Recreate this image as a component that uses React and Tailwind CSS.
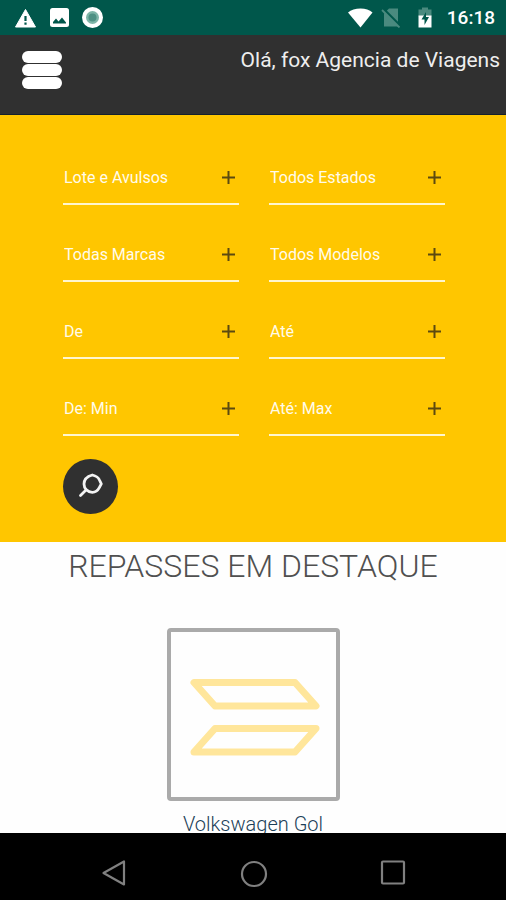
import React from "react";

const filters = [
  { id: "tipo", label: "Lote e Avulsos" },
  { id: "estado", label: "Todos Estados" },
  { id: "marca", label: "Todas Marcas" },
  { id: "modelo", label: "Todos Modelos" },
  { id: "ano-de", label: "De" },
  { id: "ano-ate", label: "Até" },
  { id: "valor-min", label: "De: Min" },
  { id: "valor-max", label: "Até: Max" },
];

function StatusBar() {
  return (
    <div className="flex h-[35px] shrink-0 items-center justify-between bg-[#00574b] pr-[11px] pl-[14px] text-white">
      <div className="flex items-center gap-3">
        <svg className="h-[22px] w-[23px]" viewBox="0 0 23 22" fill="currentColor">
          <path d="M11.5 2.5 21.5 20h-20z" stroke="currentColor" strokeLinejoin="round" />
          <path d="M10.4 9h2.2v5h-2.2zM10.4 15.5h2.2v2.2h-2.2z" fill="#00574b" />
        </svg>
        <svg className="h-5 w-5" viewBox="0 0 20 20">
          <rect x="1" y="0" width="19" height="19" rx="2.5" fill="currentColor" />
          <path d="M4 15.500v-1.500l3-3.500 2.500 3 3.500-4 4 5v1z" fill="#00574b" />
        </svg>
        <svg className="h-[22px] w-[22px]" viewBox="0 0 22 22">
          <circle cx="11.500" cy="10.500" r="10.500" fill="currentColor" />
          <circle cx="11.500" cy="10.500" r="6.500" fill="#7fb5a8" />
          <circle cx="11.500" cy="10.500" r="4" fill="#4f9184" />
        </svg>
      </div>
      <div className="flex items-center">
        <svg className="mr-2 h-5 w-[26px]" viewBox="0 0 26 20" fill="currentColor">
          <path d="M1 4.500C4 2 8.500 0.500 13.500 0.500s9 1.500 12 4L13.500 19.500z" />
        </svg>
        <svg className="mr-4 h-5 w-5" viewBox="0 0 20 20">
          <path d="M8 0.500h9v18H3V5.500z" fill="#4a8a7f" />
          <path d="M2 0.500 19.500 18" stroke="#00574b" strokeWidth="2.500" />
          <path d="M1 2 18.500 19.500" stroke="#4a8a7f" strokeWidth="1.800" />
        </svg>
        <svg className="mr-[14px] h-[22px] w-4" viewBox="0 0 16 22">
          <path d="M5 0.500h6v2h3.500v7h-13v-7H5z" fill="#4a8a7f" />
          <path d="M1.500 8.500h13v12h-13z" fill="currentColor" />
          <path d="M9 5 4.500 12.500H7.500v5.500l4.500-8H9z" fill="#00574b" />
        </svg>
        <span className="text-[19px] leading-6 font-medium">16:18</span>
      </div>
    </div>
  );
}

function Header() {
  return (
    <header className="flex h-20 shrink-0 items-start justify-between border-b border-[#14202c] bg-[#303030] pt-3 pr-[6px] pl-[22px]">
      <button type="button" aria-label="Menu" className="mt-1 flex w-10 flex-col gap-px">
        <span className="h-3 w-full rounded-full bg-white" />
        <span className="h-3 w-full rounded-full bg-white" />
        <span className="h-3 w-full rounded-full bg-white" />
      </button>
      <p className="text-[21px] leading-[26px] text-[#eeeeee]">Olá, fox Agencia de Viagens</p>
    </header>
  );
}

function Filter({ id, label }) {
  return (
    <label htmlFor={id} className="grid grid-cols-1 items-center border-b-2 border-[#fff6cf]">
      <select
        id={id}
        aria-label={label}
        className="col-start-1 row-start-1 h-[52px] w-full appearance-none bg-transparent pt-[2px] pl-px text-base leading-normal text-[#fffbea] outline-none"
      >
        <option>{label}</option>
      </select>
      <svg
        className="pointer-events-none col-start-1 row-start-1 mr-1 h-[13px] w-[13px] justify-self-end"
        viewBox="0 0 13 13"
        stroke="#5c4a10"
        strokeWidth="2"
      >
        <path d="M6.500 0v13M0 6.500h13" />
      </svg>
    </label>
  );
}

function SearchForm() {
  return (
    <form className="grid shrink-0 grid-cols-2 gap-x-[30px] gap-y-[23px] bg-[#ffc600] pt-9 pr-[61px] pb-7 pl-[63px]">
      {filters.map((f) => (
        <Filter key={f.id} id={f.id} label={f.label} />
      ))}
      <button
        type="button"
        aria-label="Buscar"
        className="flex h-[55px] w-[55px] items-center justify-center rounded-full bg-[#303030]"
      >
        <svg
          className="h-[27px] w-[27px]"
          viewBox="0 0 27 27"
          fill="none"
          stroke="#f4f4f4"
          strokeWidth="2.800"
          strokeLinecap="round"
        >
          <path
            d="M15.300 2C17.500 2.600 21 3.600 22.200 6.500L24.300 10.800L22.300 14.600C20.500 18 18 19.300 15.300 19.300C10.500 19.300 7 15.500 7 11C7 6.500 10.500 3.300 15.300 2z"
            strokeLinejoin="round"
          />
          <path d="M9 17 3.500 22.500" />
        </svg>
      </button>
    </form>
  );
}

function Featured() {
  return (
    <section className="flex flex-col items-center pt-1">
      <h1 className="text-[32px] leading-10 font-light whitespace-nowrap text-[#505050]">REPASSES EM DESTAQUE</h1>
      <a href="#gol" className="mt-[42px] flex flex-col items-center">
        <svg
          className="box-border h-[173px] w-[173px] rounded-sm border-4 border-[#aaaaaa]"
          viewBox="0 0 165 165"
          fill="none"
          stroke="#ffe69b"
          strokeWidth="7"
          strokeLinejoin="round"
        >
          <path d="M23 50.500H124L145 74H44z" />
          <path d="M44 96.500H145L124 120H23z" />
        </svg>
        <span className="mt-2 text-xl leading-[30px] font-light text-[#1c3f58]">Volkswagen Gol</span>
      </a>
    </section>
  );
}

function NavBar() {
  return (
    <nav className="flex h-[67px] shrink-0 items-center justify-between bg-black pt-[14px] pr-[100px] pl-[101px] text-[#808080]">
      <button type="button" aria-label="Voltar">
        <svg className="h-7 w-[26px]" viewBox="0 0 26 28" fill="none" stroke="currentColor" strokeWidth="2.200">
          <path d="M23 1.500v23L2.500 13z" strokeLinejoin="round" />
        </svg>
      </button>
      <button type="button" aria-label="Início">
        <svg className="h-7 w-7" viewBox="0 0 28 28" fill="none" stroke="currentColor" strokeWidth="2.200">
          <circle cx="14" cy="14" r="12" />
        </svg>
      </button>
      <button type="button" aria-label="Recentes">
        <svg className="h-7 w-[26px]" viewBox="0 0 26 28" fill="none" stroke="currentColor" strokeWidth="2.200">
          <rect x="2" y="1.500" width="22" height="22" rx="1" />
        </svg>
      </button>
    </nav>
  );
}

export default function App() {
  return (
    <div className="flex h-screen flex-col bg-[#fefefe] font-['Roboto',sans-serif]">
      <StatusBar />
      <Header />
      <main className="flex min-h-0 flex-1 flex-col overflow-hidden">
        <SearchForm />
        <Featured />
      </main>
      <NavBar />
    </div>
  );
}
